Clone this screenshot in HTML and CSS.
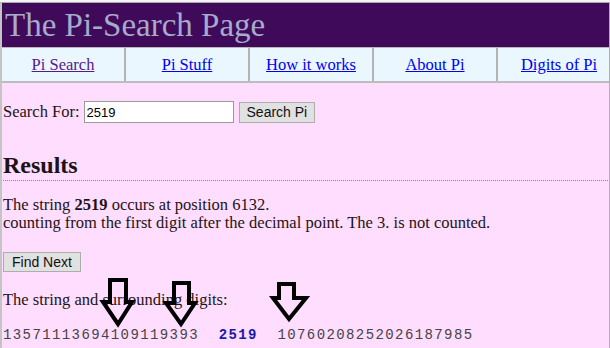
FILE: index.html
```html
<!DOCTYPE html>
<html lang="en">
<head>
    <meta charset="UTF-8">
    <title>The Pi-Search Page</title>
    <link rel="stylesheet" href="styles.css">
</head>
<body>
    <div class="page">
        <div class="header">The Pi-Search Page</div>

        <div class="nav">
            <div class="nav-cell"><a class="visited" href="#">Pi Search</a></div>
            <div class="nav-cell"><a href="#">Pi Stuff</a></div>
            <div class="nav-cell"><a href="#">How it works</a></div>
            <div class="nav-cell"><a href="#">About Pi</a></div>
            <div class="nav-cell"><a href="#">Digits of Pi</a></div>
        </div>

        <div class="content">
            <form class="search-form">
                <label for="query">Search For:</label>
                <input type="text" id="query" value="2519">
                <button type="button" class="btn">Search Pi</button>
            </form>

            <h2 class="results-title">Results</h2>

            <p class="result-text">
                The string <b>2519</b> occurs at position 6132.<br>
                counting from the first digit after the decimal point. The 3. is not counted.
            </p>

            <button type="button" class="btn find-next">Find Next</button>

            <p class="surround-label">The string and surrounding digits:</p>
            <div class="digits">13571113694109119393&nbsp;&nbsp;<span class="match">2519</span>&nbsp;&nbsp;10760208252026187985</div>
        </div>

        <!-- annotation arrows drawn over the page -->
        <svg class="arrows" width="610" height="348" viewBox="0 0 610 348">
            <path d="M110 280 H126 V302 H132 L118 324 L103 302 H110 Z" />
            <path d="M174 283 H189 V303 H195 L181 324 L166 303 H174 Z" />
            <path d="M279 284 H294 V298 H306 L289 319 L273 298 H279 Z" />
        </svg>
    </div>
</body>
</html>
```

FILE: styles.css
```css
* {
    box-sizing: border-box;
}

html {
    background: #f4f4f4;
}

body {
    margin: 0;
    padding-top: 2px;
    font-family: 'Liberation Serif', 'Times New Roman', serif;
    font-size: 16.5px;
    color: #1c1414;
}

.page {
    position: relative;
    width: 610px;
    height: 346px;
    overflow: hidden;
    background: #ffddff;
    border-top: 1px solid #a8a8a8;
    border-left: 2px solid #c4c4c4;
    border-right: 1px solid #b0b0b0;
}

.header {
    height: 44px;
    background: #400a5a;
    color: #a4abcb;
    font-size: 33px;
    line-height: 44px;
    padding-left: 3px;
}

.nav {
    display: grid;
    grid-template-columns: repeat(5, 124px);
    width: 620px;
    height: 36px;
    background: #eaf7ff;
    border-top: 1px solid #b8b8b8;
    border-bottom: 2px solid #bcbcbc;
}

.nav-cell {
    display: flex;
    align-items: center;
    justify-content: center;
    border-right: 2px solid #b4b4b4;
}

.nav-cell a {
    color: #0000ee;
}

.nav-cell a.visited {
    color: #551a8b;
}

.content {
    padding: 0 1px;
}

.search-form {
    display: flex;
    align-items: center;
    margin: 18px 0 0;
}

.search-form label {
    margin-right: 4px;
}

.search-form input {
    width: 150px;
    height: 22px;
    border: 1px solid #9a9a9a;
    font-family: 'Liberation Sans', Arial, sans-serif;
    font-size: 13px;
    padding: 1px 2px;
    margin-right: 5px;
    background: #fff;
}

.btn {
    height: 21px;
    background: #e1e1e1;
    border: 1px solid #adadad;
    font-family: 'Liberation Sans', Arial, sans-serif;
    font-size: 14px;
    padding: 0 7px;
    color: #111;
}

.results-title {
    font-size: 24px;
    margin: 28px 0 0;
    padding-bottom: 1px;
    border-bottom: 1px dotted #ff4f74;
    line-height: 28px;
}

.result-text {
    margin: 15px 0 0;
    line-height: 18px;
}

.find-next {
    margin-top: 20px;
    height: 20px;
    padding: 0 8px;
}

.surround-label {
    margin: 18px 0 0;
}

.digits {
    margin-top: 17px;
    font-family: 'Liberation Mono', 'Courier New', monospace;
    font-size: 14px;
    letter-spacing: 1.4px;
    color: #444;
}

.digits .match {
    color: #1a1aa8;
    font-weight: bold;
}

.arrows {
    position: absolute;
    top: -3px;
    left: -2px;
    pointer-events: none;
}

.arrows path {
    fill: none;
    stroke: #000;
    stroke-width: 4;
    stroke-linejoin: miter;
}
```
